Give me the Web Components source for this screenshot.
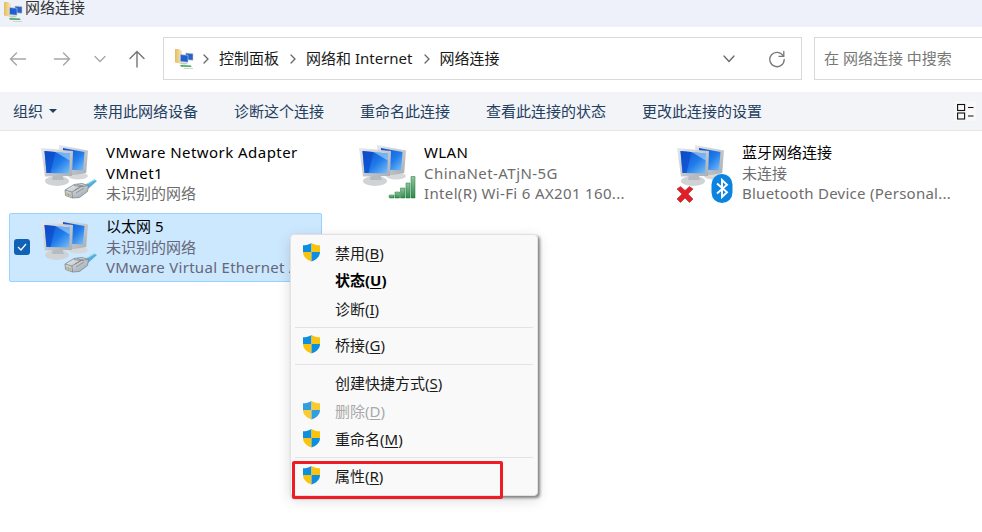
<!DOCTYPE html>
<html lang="zh"><head><meta charset="utf-8"><title>网络连接</title>
<style>
html,body{margin:0;padding:0;background:#fff}
body{font:15px/21px "Noto Sans","Noto Sans CJK SC",sans-serif;width:982px;height:532px;overflow:hidden}
</style></head><body>
<net-window>
  <title-bar>网络连接</title-bar>
  <nav-bar></nav-bar>
  <tool-bar></tool-bar>
  <tile-list>
    <net-tile badge="plug" l1="VMware Network Adapter" l2="VMnet1" l3="未识别的网络" ls1=".45" ls2=".45"></net-tile>
    <net-tile badge="signal" l1="WLAN" l2="ChinaNet-ATjN-5G" l3="Intel(R) Wi-Fi 6 AX201 160..." sec2 ls1=".4" ls2=".44" ls3=".35"></net-tile>
    <net-tile badge="bt" l1="蓝牙网络连接" l2="未连接" l3="Bluetooth Device (Personal..." sec2 ls3=".25"></net-tile>
    <net-tile badge="plug" l1="以太网 5" l2="未识别的网络" l3="VMware Virtual Ethernet Ad..." sec2 selected ls3=".3"></net-tile>
  </tile-list>
  <ctx-menu>
    <menu-item shield label="禁用" key="B"></menu-item>
    <menu-item bold label="状态" key="U"></menu-item>
    <menu-item label="诊断" key="I"></menu-item>
    <menu-sep h="8" t="3"></menu-sep>
    <menu-item shield label="桥接" key="G"></menu-item>
    <menu-sep h="10" t="4"></menu-sep>
    <menu-item label="创建快捷方式" key="S"></menu-item>
    <menu-item shield disabled label="删除" key="D"></menu-item>
    <menu-item shield label="重命名" key="M"></menu-item>
    <menu-sep h="9" t="3"></menu-sep>
    <menu-item shield label="属性" key="R"></menu-item>
  </ctx-menu>
  <red-mark></red-mark>
</net-window>
<script>
function def(name, html){
  customElements.define(name, class extends HTMLElement{
    constructor(){super();this.attachShadow({mode:'open'});if(typeof html!=='function')this.shadowRoot.innerHTML=html;}
    connectedCallback(){ if(typeof html==='function') this.shadowRoot.innerHTML=html(this); }
  });
}
const folderIcon=`<svg width="22" height="22" viewBox="0 0 22 22">
<defs><linearGradient id="fo" x1="0" y1="0" x2="1" y2="0"><stop offset="0" stop-color="#e2bd62"/><stop offset="1" stop-color="#f8e8b4"/></linearGradient></defs>
<path d="M1 1h4l3 2v13l-7-1.500z" fill="url(#fo)"/>
<path d="M12 5l7 .8v6.400l-7-.4z" fill="#2a63c4" stroke="#bcc5d2" stroke-width=".6"/>
<path d="M6.500 6.500l7.500.8v6.900l-7.500-.6z" fill="#1f5fd0" stroke="#c4ccd6" stroke-width=".6"/>
<ellipse cx="10" cy="15.500" rx="3.500" ry="1.100" fill="#c6c9cc"/>
<path d="M6 17l11 .5.5 1.500-10.500-.3z" fill="#45a955"/><path d="M10 20h9v1h-9z" fill="#cfd3d6"/></svg>`;

def('net-window',`<style>:host{display:block;position:relative;width:982px;height:532px;overflow:hidden;background:#fff}</style><slot></slot>`);

def('title-bar',`<style>:host{display:flex;align-items:center;height:27px;background:#eef1f9;color:#333;padding-left:3px;box-sizing:border-box}
svg{margin-top:-4px;flex:none}span{margin-top:-13px;line-height:14px}</style>${folderIcon}<span><slot></slot></span>`);

def('nav-bar',`<style>:host{display:flex;align-items:center;height:65px;box-sizing:border-box;background:#fff;padding:10px 0 12px 0}
.b{flex:none;display:flex;justify-content:center;align-items:center}
svg{display:block;fill:none;stroke-linecap:round}
.addr{flex:none;width:639px;height:43px;box-sizing:border-box;border:1px solid #d9d9d9;display:flex;align-items:center;padding-left:10px;margin-left:16px;color:#1a1a1a}
.addr svg.sep{margin:0 10px 0 11px}
.addr .f{margin-right:-4px;display:flex}
.end{margin-left:auto;display:flex;align-items:center}
.search{flex:none;width:180px;height:43px;box-sizing:border-box;border:1px solid #d9d9d9;border-right:none;margin-left:12px;padding-left:9px;display:flex;align-items:center;color:#777}
</style>
<div class="b" style="width:36px"><svg width="18" height="14" viewBox="0 0 18 14" stroke="#a6a6a6" stroke-width="1.400"><path d="M16.500 7H1.500M7.500 1L1.500 7l6 6"/></svg></div>
<div class="b" style="width:52px"><svg width="18" height="14" viewBox="0 0 18 14" stroke="#a6a6a6" stroke-width="1.400"><path d="M1.500 7h15M10.500 1l6 6-6 6"/></svg></div>
<div class="b" style="width:24px"><svg width="12" height="8" viewBox="0 0 12 8" stroke="#a6a6a6" stroke-width="1.300"><path d="M1 1.500l5 5 5-5"/></svg></div>
<div class="b" style="width:36px;margin-left:7px;margin-right:-8px"><svg width="18" height="18" viewBox="0 0 18 18" stroke="#757575" stroke-width="1.400"><path d="M9 17V1.500M2 8.500l7-7 7 7"/></svg></div>
<div class="addr"><span class="f">${folderIcon}</span>
<svg class="sep" width="6" height="10" viewBox="0 0 6 10" stroke="#666" stroke-width="1.300"><path d="M1 1l4 4-4 4"/></svg><span>控制面板</span>
<svg class="sep" width="6" height="10" viewBox="0 0 6 10" stroke="#666" stroke-width="1.300"><path d="M1 1l4 4-4 4"/></svg><span>网络和 Internet</span>
<svg class="sep" width="6" height="10" viewBox="0 0 6 10" stroke="#666" stroke-width="1.300"><path d="M1 1l4 4-4 4"/></svg><span>网络连接</span>
<div class="end"><svg width="14" height="8" viewBox="0 0 14 8" stroke="#666" stroke-width="1.300" style="margin-right:32px"><path d="M2 1l5 5.500L12 1"/></svg>
<svg width="18" height="18" viewBox="0 0 18 18" stroke="#777" stroke-width="1.300" style="margin-right:15px"><path d="M15.300 6A7.200 7.200 0 1 0 16.200 9.500"/><path d="M15.800 1.500V6.300H11"/></svg></div></div>
<div class="search"><span>在 网络连接 中搜索</span></div>`);

def('tool-bar',`<style>:host{display:flex;align-items:center;height:39px;box-sizing:border-box;background:#f3f4f7;border-bottom:1px solid #e6e6e6;color:#24405f;padding-left:13px}
.o{display:flex;align-items:center;margin-right:36px;gap:6px}
i{display:block;width:0;height:0;border:4px solid transparent;border-top:4px solid #24405f;border-bottom:0}
span{margin-right:36px;white-space:nowrap}
.v{margin-left:auto;margin-right:6px;width:22px;height:20px;background:#f8f8f9;display:flex;align-items:center;justify-content:center}
</style>
<div class="o">组织<i></i></div><span>禁用此网络设备</span><span>诊断这个连接</span><span>重命名此连接</span><span>查看此连接的状态</span><span>更改此连接的设置</span>
<div class="v"><svg width="17" height="17" viewBox="0 0 17 17" fill="none" stroke="#111" stroke-width="1.100"><rect x=".6" y="1.500" width="7" height="6"/><rect x=".6" y="10" width="7" height="6"/><path d="M11 4.500h5.500M11 13h5.500"/></svg></div>`);

def('tile-list',`<style>:host{display:grid;grid-template-columns:repeat(3,313px);gap:5px;padding:8px 0 0 9px;align-items:start}</style><slot></slot>`);

const monitors=`
<defs>
<linearGradient id="s" x1="0" y1="0" x2="1" y2="1"><stop offset="0" stop-color="#0b4fd0"/><stop offset=".55" stop-color="#1f7bea"/><stop offset="1" stop-color="#7cc0f7"/></linearGradient>
<linearGradient id="fr" x1="0" y1="0" x2="1" y2="1"><stop offset="0" stop-color="#e6e8eb"/><stop offset="1" stop-color="#a9aeb3"/></linearGradient>
<linearGradient id="gr" x1="0" y1="0" x2="0" y2="1"><stop offset="0" stop-color="#8cc79b"/><stop offset="1" stop-color="#2f8a4c"/></linearGradient>
<linearGradient id="pl" x1="0" y1="0" x2="1" y2="1"><stop offset="0" stop-color="#eef1f3"/><stop offset="1" stop-color="#9aa3aa"/></linearGradient>
</defs>
<ellipse cx="38" cy="33" rx="10" ry="3.500" fill="#d6d8da"/>
<path d="M19 2l29 5.500-1.800 22.500-12 2H21z" fill="url(#fr)"/>
<path d="M23 5l21.500 4-1.500 18.500-20-1z" fill="url(#s)"/>
<ellipse cx="17" cy="38" rx="12" ry="5" fill="#d0d3d6"/><path d="M13 31h9l2 6H12z" fill="#b7bbbf"/>
<path d="M1 5l32 3-1 25-27 .5z" fill="url(#fr)"/>
<path d="M4.500 8l25.500 2.500-.8 20L6.500 30z" fill="url(#s)"/>
<path d="M4.500 8l11 1.100-5 21L6.500 30z" fill="#0a48c8" opacity=".65"/>
<path d="M15.500 9.100l14.500 1.400-.2 7z" fill="#bfe0fb" opacity=".55"/>`;
const badges={
plug:`<path d="M44 43l10-6.500 3 1.500-9 8z" fill="#4fb0dc"/><path d="M45 42l10-5.500" stroke="#a8d8ee" stroke-width="1.200" fill="none"/>
<path d="M25 47l9-5.500 8-1 6.500 2-1 6-8 6-7 .5-7-2.500z" fill="url(#pl)" stroke="#7d878e" stroke-width=".8"/>
<path d="M25 47l7 2 9-5.500 7.500-1M32 49l.5 6M34 42.500l7 1M37 41.500l6.500 2M35 47l8-4.500M36 50l8-5" fill="none" stroke="#7d878e" stroke-width=".8"/>
<path d="M26 48.500l5 1.500.4 4-5.400-1.800z" fill="#c3c9cd"/><path d="M27 50.200v2M28.500 50.700v2M30 51.100v2" stroke="#b8a038" stroke-width=".8"/>`,
signal:`<g fill="url(#gr)" stroke="#25753f" stroke-width=".5"><path d="M31.500 52h4.500v3h-4c-1 0-1.500-1.500-.5-3z"/><path d="M37 49h4.500v6H37z"/><path d="M42.500 45H47v10h-4.500z"/><path d="M48 40h4v15h-4z"/><path d="M53 33.500h4V55h-4z"/></g>`,
bt:`<path d="M1 46l3.500-2.500 4.500 4 4.500-4L17 46l-5 5 5 5-3.500 3.500L9 55l-4.500 4.500L1 56l5-5z" fill="#e01f26" stroke="#b01116" stroke-width=".5"/>
<rect x="35.500" y="31" width="21" height="29" rx="10.500" fill="#0a84e0"/>
<path d="M41 40.500l10 8.800-5 4.700V37l5 4.700-10 8.800" fill="none" stroke="#fff" stroke-width="1.900"/>`};

def('net-tile',el=>{
 const line=(n,c)=>`<div class="${c}" style="letter-spacing:${el.getAttribute('ls'+n)||0}px">${el.getAttribute('l'+n)||''}</div>`;
 return `<style>
:host{display:flex;box-sizing:border-box;width:313px;height:69px;position:relative;padding:4px 0 0 31px;border:1px solid transparent;border-radius:2px;margin:0;color:#000;line-height:20.500px}
:host([selected]){background:#cce8ff;border-color:#99d1ff}
svg.ic{flex:none;margin-right:6px;margin-left:-1px;margin-top:-1px;overflow:visible}
.t{flex:1;min-width:0;margin-top:-2px;white-space:nowrap}
.s{color:#6d6d6d}
:host([selected]) .s{color:#667}
.cb{position:absolute;left:4px;top:25px;width:16px;height:16px;border-radius:3px;background:#0f62b5;display:flex;align-items:center;justify-content:center}
</style>
${el.hasAttribute('selected')?`<div class="cb"><svg width="10" height="8" viewBox="0 0 10 8" fill="none" stroke="#fff" stroke-width="1.200"><path d="M1 4l3 3 5-6"/></svg></div>`:''}
<svg class="ic" width="60" height="60" viewBox="0 0 60 60">${monitors}${badges[el.getAttribute('badge')]||''}</svg>
<div class="t">${line(1,'')}${line(2,el.hasAttribute('sec2')?'s':'')}${line(3,'s')}</div>`;
});

def('ctx-menu',`<style>:host{display:block;position:absolute;left:290px;top:234px;width:248px;height:262px;box-sizing:border-box;padding:5px 0 0;background:#f9f9f9;border:1px solid #e2e2e2;border-radius:4px;box-shadow:2px 2px 3px rgba(0,0,0,.45),0 4px 14px rgba(0,0,0,.14);color:#1a1a1a}</style><slot></slot>`);

const shield=`<svg width="19" height="20" viewBox="0 0 19 20"><path d="M9.500 1C7 2.600 4 3.300 1 3.300V10h8.500z" fill="#0c8fe0"/><path d="M9.500 1c2.500 1.600 5.500 2.300 8.500 2.300V10H9.500z" fill="#fbc30c"/><path d="M1 10h8.500v9.500C4.500 17.800 1 14.500 1 10z" fill="#fbc30c"/><path d="M18 10c0 4.500-3.500 7.800-8.500 9.500V10z" fill="#0c8fe0"/></svg>`;
def('menu-item',el=>`<style>:host{display:flex;align-items:center;height:28px;padding-left:11px;box-sizing:border-box}
.i{width:33px;flex:none;height:20px;margin-top:-4px}
svg{display:block}
.l{margin-bottom:2px}
:host([bold]) .l{font-weight:700;color:#000;margin-bottom:4px}
:host([disabled]) .l{color:#a9a9a9}
:host([disabled]) svg{opacity:.85}
u{text-underline-offset:2px}
</style><div class="i">${el.hasAttribute('shield')?shield:''}</div><span class="l">${el.getAttribute('label')}(<u>${el.getAttribute('key')}</u>)</span>`);

def('menu-sep',el=>`<style>:host{display:block;height:${el.getAttribute('h')}px;box-sizing:border-box;padding:${el.getAttribute('t')}px 4px 0}div{height:1px;background:#e3e3e3}</style><div></div>`);

def('red-mark',`<style>:host{display:block;position:absolute;left:292px;top:461px;width:211px;height:38px;box-sizing:border-box;border:3px solid #ee1c25;border-radius:2px}</style>`);
</script>
</body></html>
